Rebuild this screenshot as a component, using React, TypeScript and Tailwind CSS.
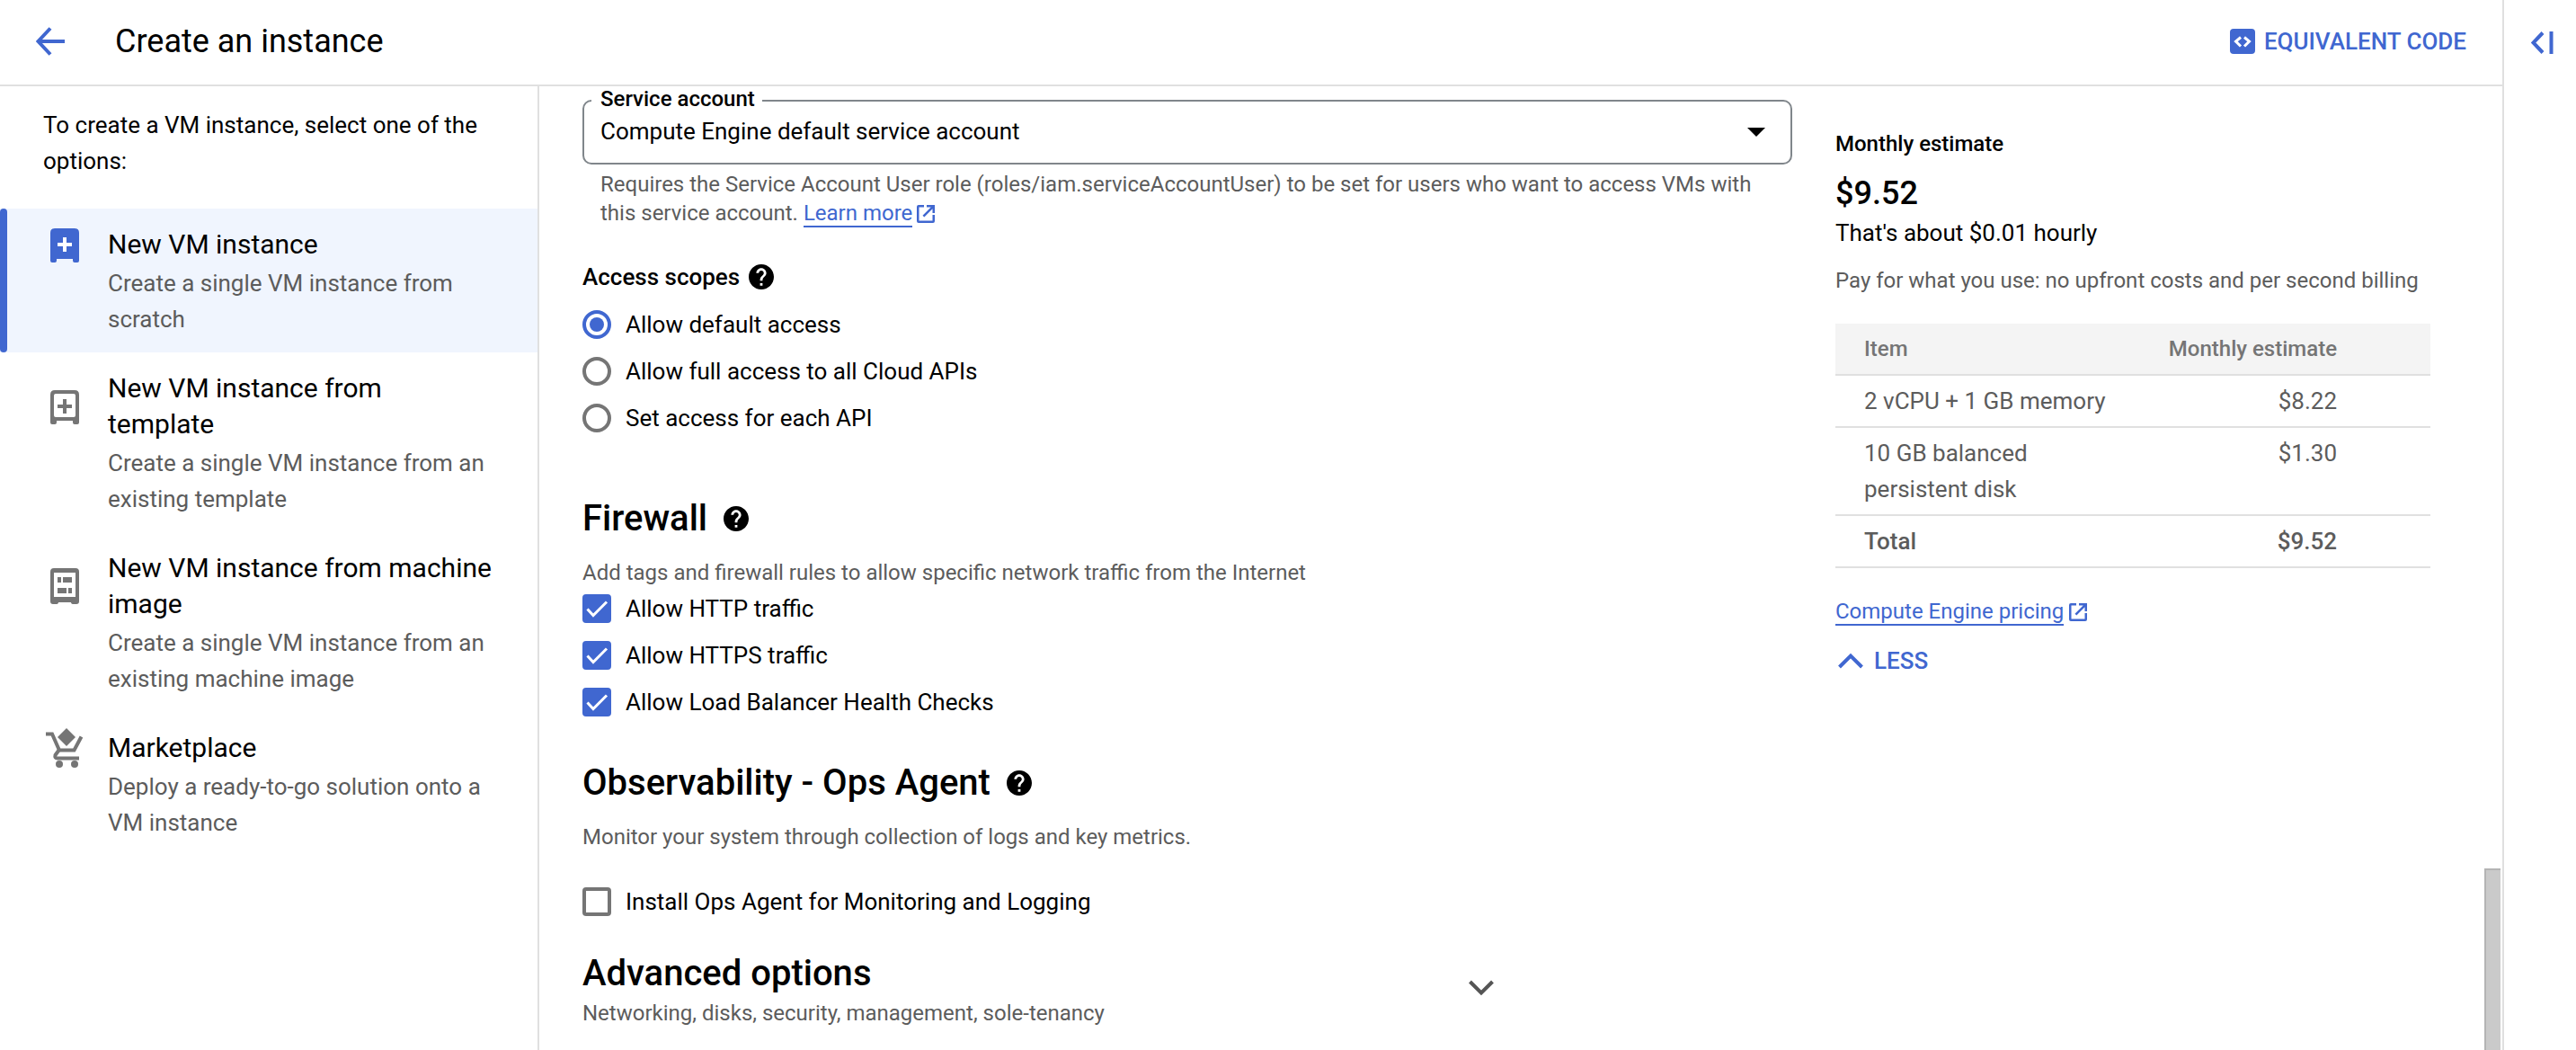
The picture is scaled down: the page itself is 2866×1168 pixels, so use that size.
import React, { useState } from "react";

const EXTERNAL = "M2 0H8V2.5H2.5V17.5H17.5V11H20V18Q20 20 18 20H2Q0 20 0 18V2Q0 0 2 0ZM11 0H20V9H17.5V4.3L8.3 13.5L6.5 11.7L15.7 2.5H11Z";

function ExternalIcon() {
  return (
    <svg className="size-5 shrink-0 fill-current" viewBox="0 0 20 20" aria-hidden="true">
      <path fillRule="evenodd" d={EXTERNAL} />
    </svg>
  );
}

function HelpButton({ label }: { label: string }) {
  return (
    <button type="button" aria-label={label} className="flex size-7 shrink-0 items-center justify-center">
      <svg className="size-7" viewBox="2 2 20 20" aria-hidden="true">
        <path
          fill="#000"
          d="M12 2C6.48 2 2 6.48 2 12s4.48 10 10 10 10-4.48 10-10S17.52 2 12 2zm1 17h-2v-2h2v2zm2.07-7.75l-.9.92C13.45 12.9 13 13.5 13 15h-2v-.5c0-1.1.45-2.1 1.17-2.83l1.24-1.26c.37-.36.59-.86.59-1.41 0-1.1-.9-2-2-2s-2 .9-2 2H8c0-2.21 1.79-4 4-4s4 1.79 4 4c0 .88-.36 1.68-.93 2.25z"
        />
      </svg>
    </button>
  );
}

function VmIcon() {
  return (
    <svg className="mt-[2px] h-[38px] w-8" viewBox="0 0 32 38" aria-hidden="true">
      <path fill="#4067d0" d="M5 0H27Q32 0 32 5V36Q32 38 30 38H27Q25 38 25 36V34H7V36Q7 38 5 38H2Q0 38 0 36V5Q0 0 5 0Z" />
      <path stroke="#fff" strokeWidth="4" d="M8 18H24M16 10V26" />
    </svg>
  );
}

function TemplateIcon() {
  return (
    <svg className="mt-[22px] h-[38px] w-8" viewBox="0 0 32 38" aria-hidden="true">
      <path
        fill="#757575"
        fillRule="evenodd"
        d="M5 0H27Q32 0 32 5V36Q32 38 30 38H27Q25 38 25 36V34H7V36Q7 38 5 38H2Q0 38 0 36V5Q0 0 5 0ZM6 4Q4 4 4 6V28Q4 30 6 30H26Q28 30 28 28V6Q28 4 26 4Z"
      />
      <path stroke="#757575" strokeWidth="4" d="M8 18H24M16 10V26" />
    </svg>
  );
}

function MachineImageIcon() {
  return (
    <svg className="mt-5 h-10 w-8" viewBox="0 0 32 40" aria-hidden="true">
      <path
        fill="#757575"
        fillRule="evenodd"
        d="M4 0H28Q32 0 32 4V37Q32 40 29 40H26Q23 40 23 38H9Q9 40 6 40H3Q0 40 0 37V4Q0 0 4 0ZM4 5V32H28V5ZM8 10H12V16H8ZM14 10H24V16H14ZM8 22H18V28H8ZM20 22H24V28H20Z"
      />
    </svg>
  );
}

function CartIcon() {
  return (
    <svg className="-mt-[2px] h-11 w-[42px]" viewBox="0 0 42 44" aria-hidden="true">
      <path fill="#757575" d="M23 0L33 10L23 20L13 10Z" />
      <g fill="none" stroke="#757575" strokeWidth="4">
        <path d="M0 6.5H7L15 24.5H31.5L39.5 9.5" />
        <path d="M14.5 24.5L10.5 30Q9.5 33.5 13 33.5H37" />
      </g>
      <circle cx="15" cy="40" r="4" fill="#757575" />
      <circle cx="32" cy="40" r="4" fill="#757575" />
    </svg>
  );
}

const OPTIONS = [
  { title: "New VM instance", text: "Create a single VM instance from scratch", icon: VmIcon },
  { title: "New VM instance from template", text: "Create a single VM instance from an existing template", icon: TemplateIcon },
  { title: "New VM instance from machine image", text: "Create a single VM instance from an existing machine image", icon: MachineImageIcon },
  { title: "Marketplace", text: "Deploy a ready-to-go solution onto a VM instance", icon: CartIcon },
];

const SCOPES = ["Allow default access", "Allow full access to all Cloud APIs", "Set access for each API"];
const RULES = ["Allow HTTP traffic", "Allow HTTPS traffic", "Allow Load Balancer Health Checks"];

function Radio({ label, checked, onChange }: { label: string; checked: boolean; onChange: () => void }) {
  return (
    <label className="flex h-[52px] items-center gap-4">
      <input
        type="radio"
        name="scope"
        checked={checked}
        onChange={onChange}
        className="size-8 appearance-none rounded-full border-4 border-[#757575] bg-white checked:border-[#4067d0] checked:bg-[#4067d0] checked:bg-clip-content checked:p-1"
      />
      {label}
    </label>
  );
}

function Checkbox({ label, initial }: { label: string; initial: boolean }) {
  const [on, setOn] = useState(initial);
  return (
    <label className="flex h-[52px] items-center gap-4">
      <span className="relative flex size-8">
        <input
          type="checkbox"
          checked={on}
          onChange={() => setOn(!on)}
          className="size-8 appearance-none rounded-sm border-4 border-[#757575] bg-white checked:border-[#4067d0] checked:bg-[#4067d0]"
        />
        {on && (
          <svg className="pointer-events-none absolute inset-0 size-8" viewBox="0 0 32 32" aria-hidden="true">
            <path fill="none" stroke="#fff" strokeWidth="3" d="M5.5 16.5L12 23.5L27 8.5" />
          </svg>
        )}
      </span>
      {label}
    </label>
  );
}

function Sidebar() {
  return (
    <nav className="w-[600px] shrink-0 border-r-2 border-[#e0e0e0]">
      <p className="px-12 pt-[23px] pb-[33px] text-[26px] leading-10">To create a VM instance, select one of the options:</p>
      <ul>
        {OPTIONS.map(({ title, text, icon: Icon }, i) => (
          <li key={title}>
            <a
              href="#option"
              aria-current={i === 0 ? "page" : undefined}
              className={`relative flex pt-5 pr-[50px] pb-[17px] ${i === 0 ? "bg-[#f0f5fe]" : ""}`}
            >
              {i === 0 && <span className="absolute inset-y-0 left-0 w-2 rounded bg-[#4067d0]" />}
              <span className="flex w-[120px] shrink-0 items-start pl-[51px]">
                <span className="flex w-[42px] justify-center">
                  <Icon />
                </span>
              </span>
              <span className="flex flex-col gap-[3px]">
                <span className="text-[30px] leading-10">{title}</span>
                <span className="text-[26px] leading-10 text-[#5c5c5c]">{text}</span>
              </span>
            </a>
          </li>
        ))}
      </ul>
    </nav>
  );
}

function Form() {
  const [scope, setScope] = useState(0);
  return (
    <form className="min-w-0 flex-1 pt-1 text-[26px] leading-10">
      <fieldset className="relative rounded-[10px] border-2 border-[#80868b] pb-[13px]">
        <legend className="ml-2 pr-2 pb-1 pl-[10px] text-2xl leading-5 font-medium">
          <label htmlFor="account" className="block">Service account</label>
        </legend>
        <select id="account" className="block h-11 w-full appearance-none bg-transparent px-[18px] leading-10">
          <option>Compute Engine default service account</option>
        </select>
        <svg className="pointer-events-none absolute top-[18px] right-7 h-[10px] w-5" viewBox="0 0 20 10" aria-hidden="true">
          <path d="M0 0H20L10 10Z" />
        </svg>
      </fieldset>
      <p className="mt-[6px] px-5 text-2xl leading-8 text-[#5c5c5c]">
        Requires the Service Account User role (roles/iam.serviceAccountUser) to be set for users who want to access VMs with this service account.{" "}
        <a href="#learn" className="mt-[2px] inline-flex h-[30px] items-center gap-[5px] align-top leading-7 text-[#4067d0]">
          <span className="border-b-2 border-current">Learn more</span>
          <ExternalIcon />
        </a>
      </p>

      <div className="mt-[35px] flex items-center gap-[10px]">
        <h3 id="scopes" className="font-medium">Access scopes</h3>
        <HelpButton label="About access scopes" />
      </div>
      <div role="radiogroup" aria-labelledby="scopes" className="mt-[7px]">
        {SCOPES.map((label, i) => (
          <Radio key={label} label={label} checked={scope === i} onChange={() => setScope(i)} />
        ))}
      </div>

      <div className="mt-[62px] flex items-center gap-[18px]">
        <h2 className="text-[40px] leading-12 font-medium">Firewall</h2>
        <HelpButton label="About firewall" />
      </div>
      <p className="mt-[22px] text-2xl leading-7 text-[#5c5c5c]">Add tags and firewall rules to allow specific network traffic from the Internet</p>
      {RULES.map((label) => (
        <Checkbox key={label} label={label} initial />
      ))}

      <div className="mt-10 flex items-center gap-[18px]">
        <h2 className="text-[40px] leading-12 font-medium">Observability - Ops Agent</h2>
        <HelpButton label="About the Ops Agent" />
      </div>
      <p className="mt-[22px] mb-8 text-2xl leading-7 text-[#5c5c5c]">Monitor your system through collection of logs and key metrics.</p>
      <Checkbox label="Install Ops Agent for Monitoring and Logging" initial={false} />

      <button type="button" aria-expanded="false" className="mt-[30px] flex w-full max-w-[1014px] items-center justify-between text-left">
        <span className="flex flex-col gap-[6px]">
          <span className="text-[40px] leading-12 font-medium">Advanced options</span>
          <span className="text-2xl leading-7 text-[#5c5c5c]">Networking, disks, security, management, sole-tenancy</span>
        </span>
        <svg className="mb-[2px] h-[18px] w-7" viewBox="0 0 28 18" aria-hidden="true">
          <path fill="none" stroke="#555" strokeWidth="4" d="M1.5 2L14 14.5L26.5 2" />
        </svg>
      </button>
    </form>
  );
}

const ROWS = [
  ["2 vCPU + 1 GB memory", "$8.22"],
  ["10 GB balanced persistent disk", "$1.30"],
];

function Estimate() {
  return (
    <aside className="w-[662px] shrink-0 pt-11 text-[26px] leading-10">
      <h3 className="text-2xl leading-10 font-medium">Monthly estimate</h3>
      <p className="mt-[11px] text-4xl leading-12 font-medium">$9.52</p>
      <p>That&apos;s about $0.01 hourly</p>
      <p className="mt-[17px] text-2xl leading-8 text-[#5c5c5c]">Pay for what you use: no upfront costs and per second billing</p>
      <table className="mt-8 w-full border-collapse text-[#5c5c5c]">
        <thead>
          <tr className="border-b-2 border-[#e0e0e0] bg-[#f4f4f4] text-2xl leading-10 text-[#757575]">
            <th scope="col" className="py-2 pl-8 text-left font-medium">Item</th>
            <th scope="col" className="w-[304px] py-2 pr-[104px] text-right font-medium whitespace-nowrap">Monthly estimate</th>
          </tr>
        </thead>
        <tbody>
          {ROWS.map(([item, cost]) => (
            <tr key={item} className="border-b-2 border-[#e0e0e0] align-top">
              <td className="py-2 pr-12 pl-8">{item}</td>
              <td className="py-2 pr-[104px] text-right">{cost}</td>
            </tr>
          ))}
          <tr className="border-b-2 border-[#e0e0e0] font-medium">
            <th scope="row" className="py-2 pl-8 text-left font-medium">Total</th>
            <td className="py-2 pr-[104px] text-right">$9.52</td>
          </tr>
        </tbody>
      </table>
      <a href="#pricing" className="mt-[34px] flex items-center gap-[6px] text-2xl leading-7 text-[#4067d0]">
        <span className="border-b-2 border-current">Compute Engine pricing</span>
        <ExternalIcon />
      </a>
      <button type="button" className="mt-[19px] flex items-center gap-3 pl-[3px] leading-10 font-medium text-[#4067d0]">
        <svg className="h-[18px] w-7" viewBox="0 0 28 18" aria-hidden="true">
          <path fill="none" stroke="currentColor" strokeWidth="4" d="M1.5 16L14 3.5L26.5 16" />
        </svg>
        LESS
      </button>
    </aside>
  );
}

export default function App() {
  return (
    <div className="flex h-screen overflow-hidden bg-white font-['Roboto',sans-serif] text-black">
      <div className="flex min-w-0 flex-1 flex-col">
        <header className="flex h-24 shrink-0 items-center border-b-2 border-[#e0e0e0] px-10 pb-[3px]">
          <button type="button" aria-label="Back" className="mr-14">
            <svg className="size-8" viewBox="0 0 32 32" aria-hidden="true">
              <path fill="none" stroke="#4067d0" strokeWidth="4" d="M32 16H3M16 1.5L2.5 16L16 30.5" />
            </svg>
          </button>
          <h1 className="text-4xl leading-12">Create an instance</h1>
          <button type="button" className="ml-auto flex items-center gap-[10px] text-[26px] leading-10 font-medium text-[#4067d0]">
            <svg className="size-7" viewBox="0 0 28 28" aria-hidden="true">
              <rect width="28" height="28" rx="4" fill="#4067d0" />
              <path fill="none" stroke="#fff" strokeWidth="3" d="M12 9.5L6.5 14L12 19.5M16 9.5L21.5 14L16 19.5" />
            </svg>
            EQUIVALENT CODE
          </button>
        </header>
        <div className="flex min-h-0 flex-1">
          <Sidebar />
          <main className="flex min-w-0 flex-1 gap-12 overflow-hidden pr-[60px] pl-12">
            <Form />
            <Estimate />
          </main>
          <div className="mr-[2px] flex w-[18px] shrink-0 flex-col justify-end" aria-hidden="true">
            <div className="h-[202px] border-t-2 border-l-2 border-[#b4b4b4] bg-[#cacaca]" />
          </div>
        </div>
      </div>
      <aside className="w-[82px] shrink-0 border-l-2 border-[#e0e0e0] pt-[35px] pl-[30px]">
        <button type="button" aria-label="Expand panel" className="block">
          <svg className="h-[25px] w-[26px]" viewBox="0 0 26 25" aria-hidden="true">
            <path fill="none" stroke="#4067d0" strokeWidth="4" d="M13 1.5L2.5 12.5L13 23.5M22.5 0V25" />
          </svg>
        </button>
      </aside>
    </div>
  );
}
